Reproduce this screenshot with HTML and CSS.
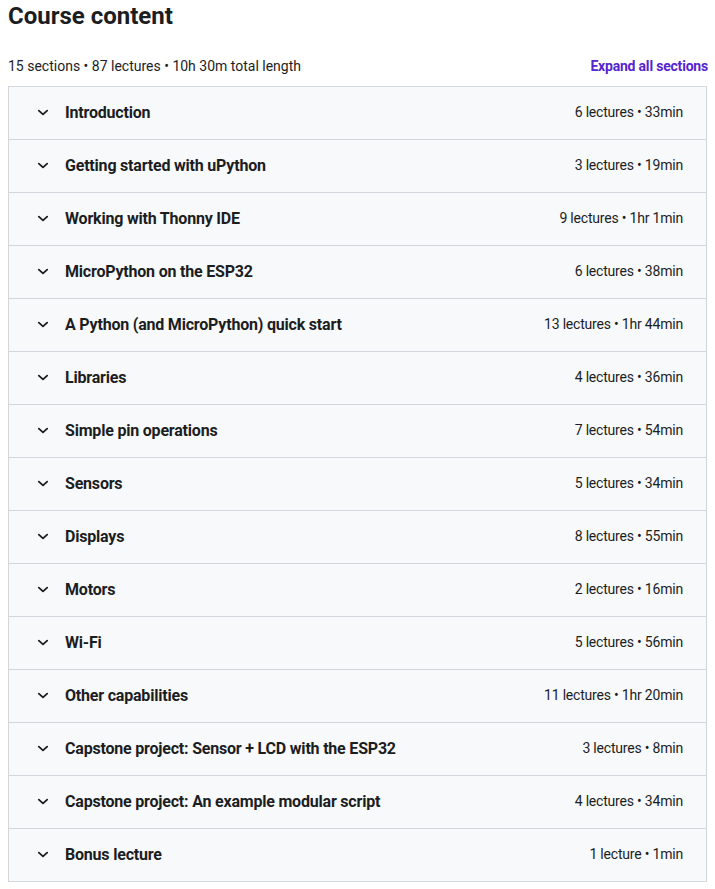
FILE: index.html
```html
<!DOCTYPE html>
<html>
<head>
<meta charset="utf-8">
<link rel="stylesheet" href="styles.css">
</head>
<body>
<div class="course-content">
  <h2 class="title">Course content</h2>
  <div class="summary">
    <span class="summary-text">15 sections • 87 lectures • 10h 30m total length</span>
    <button class="expand">Expand all sections</button>
  </div>
  <div class="sections" id="sections"></div>
</div>
<script src="app.js"></script>
</body>
</html>
```
FILE: styles.css
```css
* { box-sizing: border-box; }
body {
  margin: 0 7px 0 8px;
  font-family: Roboto, "Liberation Sans", sans-serif;
  color: #1c1d1f;
  background: #fff;
}
.title {
  margin: 0;
  font-size: 24px;
  line-height: 32px;
  font-weight: 700;
  color: #1c1d1f;
}
.summary {
  display: flex;
  justify-content: space-between;
  align-items: center;
  margin-top: 24px;
  height: 20px;
  margin-bottom: 10px;
}
.summary-text {
  font-size: 14px;
  color: #1c1d1f;
}
.expand {
  border: 0;
  background: none;
  padding: 0;
  font-family: inherit;
  font-size: 14px;
  font-weight: 700;
  letter-spacing: -0.2px;
  color: #5624d0;
  cursor: pointer;
}
.sections {
  border: 1px solid #d1d7dc;
  border-bottom: 0;
  margin-right: 1px;
}
.row {
  display: flex;
  align-items: center;
  height: 53px;
  padding: 0 23px 2px 25px;
  background: #f7f9fa;
  border-bottom: 1px solid #d1d7dc;
}
.chev {
  width: 16px;
  height: 16px;
  flex: none;
  margin-right: 15px;
}
.row-title {
  flex: 1;
  font-size: 16px;
  font-weight: 700;
  letter-spacing: -0.2px;
  color: #1c1d1f;
}
.row-meta {
  font-size: 14px;
  letter-spacing: -0.2px;
  color: #1c1d1f;
}
```
FILE: app.js
```js
const data = [
  ["Introduction", "6 lectures • 33min"],
  ["Getting started with uPython", "3 lectures • 19min"],
  ["Working with Thonny IDE", "9 lectures • 1hr 1min"],
  ["MicroPython on the ESP32", "6 lectures • 38min"],
  ["A Python (and MicroPython) quick start", "13 lectures • 1hr 44min"],
  ["Libraries", "4 lectures • 36min"],
  ["Simple pin operations", "7 lectures • 54min"],
  ["Sensors", "5 lectures • 34min"],
  ["Displays", "8 lectures • 55min"],
  ["Motors", "2 lectures • 16min"],
  ["Wi-Fi", "5 lectures • 56min"],
  ["Other capabilities", "11 lectures • 1hr 20min"],
  ["Capstone project: Sensor + LCD with the ESP32", "3 lectures • 8min"],
  ["Capstone project: An example modular script", "4 lectures • 34min"],
  ["Bonus lecture", "1 lecture • 1min"]
];
const wrap = document.getElementById("sections");
for (const [t, m] of data) {
  const row = document.createElement("div");
  row.className = "row";
  row.innerHTML = '<svg class="chev" viewBox="0 0 16 16"><path d="M4.8 6.6 L9 10.4 L13.2 6.6" fill="none" stroke="#1c1d1f" stroke-width="1.8" stroke-linecap="round" stroke-linejoin="round"/></svg>' +
    '<span class="row-title"></span><span class="row-meta"></span>';
  row.querySelector(".row-title").textContent = t;
  row.querySelector(".row-meta").textContent = m;
  wrap.appendChild(row);
}
```
